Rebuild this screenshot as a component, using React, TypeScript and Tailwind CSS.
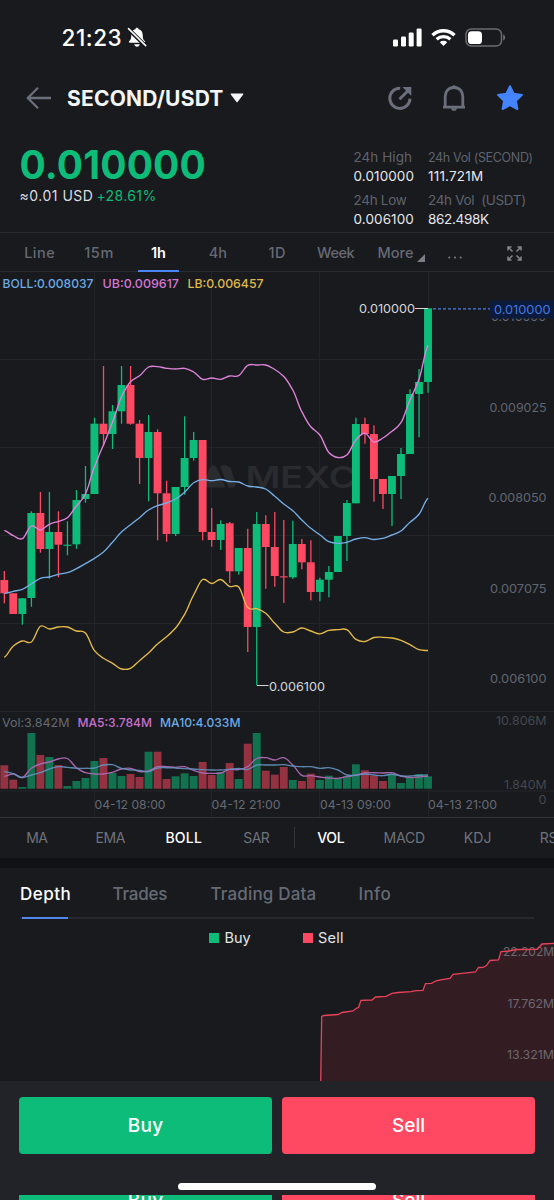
import React from "react";

type Candle = [0 | 1, number, number, number, number, number];

const GREEN = "#0dbc78";
const RED = "#ff4861";

// up flag, high, body top, body bottom, low, top of the volume bar
const candles: Candle[] = [
  [0, 571, 580, 593.3, 603.3, 765.3],
  [0, 593.3, 593.3, 614, 614, 779.7],
  [1, 598.3, 598.3, 614, 624.7, 787],
  [1, 511.3, 513, 598, 606.7, 733],
  [0, 492, 513, 549, 552.7, 755],
  [1, 492, 532, 549, 578.7, 757],
  [0, 511.3, 532, 544.7, 577.3, 765],
  [1, 521.3, 544.7, 545.8, 555.3, 786],
  [1, 490, 500, 544.3, 548.7, 781],
  [1, 466, 494, 499, 502.7, 778],
  [1, 417.7, 423.7, 494, 494, 761],
  [0, 366, 423.7, 434, 446, 758],
  [1, 405, 411.3, 434, 449, 773],
  [1, 366, 385, 411.3, 423.7, 776],
  [0, 366, 385, 423.7, 424.7, 774],
  [0, 420, 423.7, 458, 484, 777],
  [1, 415, 432, 458, 501.3, 751.7],
  [0, 429.3, 432, 493.3, 540.3, 751.7],
  [0, 480.7, 493.3, 534, 541.7, 779],
  [1, 487, 487, 534, 536, 776.3],
  [1, 416.3, 458, 487, 494.7, 773.3],
  [1, 432, 440, 458, 460.7, 776],
  [0, 440, 440, 532, 540.3, 762],
  [0, 508, 532, 540, 546.7, 775],
  [1, 520.3, 524, 540, 550, 772],
  [0, 522, 523.3, 571.3, 583, 763],
  [1, 548, 548, 571.3, 574.7, 779],
  [0, 528.7, 548, 627, 652, 743.7],
  [1, 512, 524, 627, 685.3, 733],
  [0, 515.3, 524, 547, 588.7, 770.7],
  [0, 512, 547, 576, 586.7, 774.7],
  [0, 520, 576.3, 577.4, 603, 767],
  [1, 520.7, 544, 577.3, 579, 780],
  [0, 539, 544, 562.3, 569.3, 781],
  [0, 540.3, 562.3, 592, 600.3, 773.7],
  [1, 577.7, 579.7, 592, 601.3, 780],
  [1, 566, 572, 579.7, 597.3, 775.7],
  [1, 536, 536, 572, 572, 778],
  [1, 500, 503, 536, 561, 776],
  [1, 417.7, 424, 503.3, 503.3, 764.3],
  [0, 417.7, 424, 434, 443.7, 770.3],
  [0, 425.3, 434, 479, 501.7, 775.7],
  [0, 479, 479, 494, 509, 781],
  [1, 476, 476, 494, 526, 773.7],
  [1, 448, 454, 476, 499, 783],
  [1, 389.3, 394, 454, 454, 777],
  [1, 369, 382, 394, 437.3, 774],
  [1, 308.3, 308.3, 382, 392.7, 776.3],
];

const upper = [530.3, 535.7, 538.7, 526, 530, 524.3, 521.3, 517.7, 506, 494, 466.7, 445, 422.3, 396.7, 381.7, 375.7, 367, 366.7, 368.3, 369, 368.3, 372, 379.3, 378, 379.3, 376, 375.7, 365.3, 365, 365, 369.5, 376.5, 390, 411.7, 426.7, 435, 452.5, 457.5, 455, 440, 433.3, 442, 438, 431.3, 422.7, 400, 379.3, 345.3];
const middle = [593.7, 591.3, 589.3, 584, 578.3, 577, 574.3, 572.7, 568.7, 563.7, 558.3, 552, 542.3, 532, 524.7, 517.7, 510, 505.7, 503, 499, 492.3, 482.7, 479.7, 480.7, 479.5, 481.5, 482, 486, 487, 489, 496.3, 504, 510.7, 520, 528.3, 534.7, 541.7, 543.3, 542.3, 539, 537.7, 539.5, 538.3, 535, 531, 522.3, 514.3, 498.3];
const lower = [657.3, 646, 641, 642, 626.3, 629, 627, 627, 631, 633, 650.7, 658.3, 663.3, 669, 668.3, 660.7, 653, 644, 636.7, 628, 614.3, 595, 579.5, 583.5, 579.5, 586.5, 587, 607.5, 608.7, 613.3, 623.3, 632, 632, 628, 631, 633.8, 630.3, 629.7, 629.7, 639.3, 641.5, 637.5, 637.3, 638, 640.3, 644.7, 649.7, 650.5];
const ma5 = [776.3, 774, 777.5, 768.3, 764, 762, 759, 758.5, 767.7, 772.7, 774, 774, 772.3, 769, 768.3, 771.5, 771, 766.7, 766.7, 767.3, 766.7, 770.3, 773, 773.3, 773, 769.3, 769.7, 766.7, 758.5, 757.7, 760, 757.7, 765, 775.3, 775.7, 777, 778, 778.3, 776.7, 775, 773, 772.7, 773, 772.7, 776, 777.3, 777, 776.3];
const ma10 = [771.7, 773.7, 777.5, 775, 772.7, 769, 766.7, 767.3, 768.3, 768.3, 768, 765, 764.7, 768.3, 770, 770.3, 771.7, 768, 767.7, 768, 768.7, 769, 769.7, 770, 770, 769.3, 768.5, 769.5, 765, 765, 765, 764.7, 766, 766.7, 766.7, 768.3, 767.7, 770, 775, 775.3, 774, 775, 775.7, 774.3, 776, 776, 775.3, 775];

const cx = (i: number) => 4.3 + 9.015 * i;

function smooth(ys: number[]) {
  let d = `M${cx(0)} ${ys[0]}`;
  for (let i = 0; i < ys.length - 1; i++) {
    const a = ys[Math.max(i - 1, 0)];
    const b = ys[i];
    const c = ys[i + 1];
    const e = ys[Math.min(i + 2, ys.length - 1)];
    d += `C${cx(i) + 3.4} ${b + (c - a) / 6} ${cx(i + 1) - 3.4} ${c - (e - b) / 6} ${cx(i + 1)} ${c}`;
  }
  return d;
}

function Label({ x, to, y, fill, size = 12.3, weight = 400, children }: { x: number; to: number; y: number; fill: string; size?: number; weight?: number; children: string }) {
  return (
    <text x={x} y={y} fill={fill} fontSize={size} fontWeight={weight} textLength={to - x} lengthAdjust="spacingAndGlyphs">
      {children}
    </text>
  );
}

function StatusBar() {
  return (
    <div className="flex h-[75px] shrink-0 items-center pl-[61.5px] pr-[48px]">
      <span className="pt-px text-[22.5px] leading-none font-medium tracking-[0.55px] text-white">21:23</span>
      <svg className="ml-[4.5px]" width="20" height="21" viewBox="0 0 20 21">
        <path d="M10 .8c.9 0 1.6.6 1.7 1.5 2.700.8 4 2.900 4 5.600 0 3.700.7 5 2.100 6.200.7.6.4 1.700-.6 1.700H2.800c-1 0-1.300-1.100-.6-1.700C3.600 12.900 4.300 11.600 4.300 7.900c0-2.700 1.300-4.800 4-5.600C8.400 1.400 9.100.8 10 .8z" fill="#fff" />
        <path d="M7.200 17.300h5.600c-.3 1.500-1.400 2.400-2.800 2.400s-2.500-.9-2.800-2.400z" fill="#fff" />
        <path d="M1.200 1.800l17.600 17.400" stroke="#181a1e" strokeWidth="4" />
        <path d="M1.500 1.600l17.200 17" stroke="#fff" strokeWidth="1.500" strokeLinecap="round" />
      </svg>
      <svg className="ml-auto" width="29" height="19" viewBox="0 0 29 19" fill="#fff">
        <rect x="0" y="11.500" width="5" height="7" rx="1.300" />
        <rect x="8" y="8.500" width="5" height="10" rx="1.300" />
        <rect x="15.700" y="4.500" width="5" height="14" rx="1.300" />
        <rect x="23.600" y="0.500" width="5" height="18" rx="1.300" />
      </svg>
      <svg className="ml-[9px]" width="25" height="19" viewBox="0 0 25 19">
        <path d="M1.500 7.200a16 16 0 0 1 22 0" stroke="#fff" strokeWidth="3.400" fill="none" />
        <path d="M5.600 11.300a10.200 10.200 0 0 1 13.800 0" stroke="#fff" strokeWidth="3.200" fill="none" />
        <path d="M12.500 18l-3.700-3.700a5.500 5.500 0 0 1 7.400 0z" fill="#fff" />
      </svg>
      <svg className="ml-[9px]" width="41" height="19" viewBox="0 0 41 19">
        <rect x="1" y="1" width="35.500" height="17" rx="5.300" fill="none" stroke="#6b6c70" strokeWidth="1.500" />
        <rect x="3" y="3.200" width="14" height="12.800" rx="3.600" fill="#fff" />
        <path d="M38.200 6.500c1.300.5 2 1.600 2 3s-.7 2.500-2 3z" fill="#6b6c70" />
      </svg>
    </div>
  );
}

function Header() {
  return (
    <div className="flex h-[46px] shrink-0 items-center pr-[30.500px] pl-[25.500px]">
      <svg width="26" height="24" viewBox="0 0 26 24" fill="none" stroke="#6b6f7b" strokeWidth="2.300">
        <path d="M25 12H2M12 1.800L1.800 12 12 22.200" />
      </svg>
      <h1 className="ml-[15.500px] text-[21px] leading-none font-bold tracking-[0.2px] text-[#f4f5f7]">SECOND/USDT</h1>
      <svg className="ml-[6.500px]" width="14" height="10" viewBox="0 0 14 10">
        <path d="M1.200.5h11.600c.5 0 .7.5.4.9L7.600 9c-.3.4-.8.4-1.100 0L.8 1.400C.5 1 .7.5 1.200.5z" fill="#f4f5f7" />
      </svg>
      <svg className="ml-auto" width="24" height="26" viewBox="0 0 24 26">
        <path d="M12.200 3.200a10.100 10.100 0 1 0 9.800 10.400" fill="none" stroke="#6b6f7b" strokeWidth="3" />
        <path d="M11.500 14.300l8.500-8.500" stroke="#6b6f7b" strokeWidth="3" />
        <path d="M14.300 2h9v9z" fill="#6b6f7b" />
      </svg>
      <svg className="ml-[30px]" width="24" height="28" viewBox="0 0 24 28" fill="none" stroke="#6b6f7b" strokeWidth="2.800">
        <path d="M3.200 22.500V12.500c0-5.200 3.500-9 8.800-9s8.800 3.800 8.800 9v10M1 23.200h22" />
        <path d="M9 3L12 1l3 2z" fill="#6b6f7b" stroke="none" />
        <path d="M8.800 24.300h6.400L13.700 26.800h-3.400z" fill="#6b6f7b" stroke="none" />
      </svg>
      <svg className="-mt-px ml-[30px]" width="28" height="28" viewBox="0 0 28 28">
        <path d="M14 2.200l3.600 7.600 8.400 1.100-6.100 5.800 1.500 8.300-7.400-4-7.400 4 1.500-8.300L2 10.900l8.400-1.100z" fill="#4484fd" stroke="#4484fd" strokeWidth="2" strokeLinejoin="round" />
      </svg>
    </div>
  );
}

function Stat({ label, value, labelClass, valueClass }: { label: string; value: string; labelClass: string; valueClass: string }) {
  return (
    <div className="flex flex-col text-[13.5px] leading-[19px] whitespace-pre">
      <span className={`text-[#5f636d] ${labelClass}`}>{label}</span>
      <span className={`text-[#e6e7ea] ${valueClass}`}>{value}</span>
    </div>
  );
}

function PriceSummary() {
  return (
    <div className="flex h-[111px] shrink-0">
      <div className="w-[353.500px] pl-[19.5px] pt-[23.500px]">
        <div className="text-[39px] leading-[40px] font-bold tracking-[0.14px] text-[#0dbc78]">0.010000</div>
        <div className="flex text-[14px] leading-[22px]">
          <span className="tracking-[0.5px] text-[#dcdde1]">≈0.01 USD</span>
          <span className="ml-[3px] tracking-[0.38px] text-[#0dbc78]">+28.61%</span>
        </div>
      </div>
      <div className="flex w-[74.500px] flex-col gap-[5px] pt-[27px]">
        <Stat label="24h High" value="0.010000" labelClass="tracking-[0.06px]" valueClass="tracking-[0.1px]" />
        <Stat label="24h Low" value="0.006100" labelClass="tracking-[-0.3px]" valueClass="tracking-[0.1px]" />
      </div>
      <div className="flex flex-col gap-[5px] pt-[27px]">
        <Stat label="24h Vol (SECOND)" value="111.721M" labelClass="text-[12.5px] tracking-[-0.34px]" valueClass="tracking-[0.2px]" />
        <Stat label="24h Vol  (USDT)" value="862.498K" labelClass="tracking-[-0.33px]" valueClass="tracking-[-0.33px]" />
      </div>
    </div>
  );
}

function IntervalTabs() {
  const cell = "flex h-full w-[59.4px] items-center justify-center pt-[2px]";
  return (
    <div className="flex h-[40px] shrink-0 items-center border-y border-[#292b30] pl-[10px] text-[14.5px] font-medium text-[#666973]">
      <div className={cell}><span className="tracking-[0.5px]">Line</span></div>
      <div className={cell}><span className="tracking-[0.6px]">15m</span></div>
      <div className={`${cell} relative font-semibold text-white`}>
        1h
        <span className="absolute -bottom-px left-[9px] h-[2.500px] w-[41px] bg-[#4a85f6]" />
      </div>
      <div className={cell}>4h</div>
      <div className={cell}><span className="tracking-[0.4px]">1D</span></div>
      <div className={cell}><span className="mr-[2px] tracking-[-0.4px]">Week</span></div>
      <div className={`${cell} relative`}>
        <span className="mr-px">More</span>
        <svg className="absolute right-[1px] bottom-[9px]" width="8" height="8" viewBox="0 0 8 8"><path d="M8 0v8H0z" fill="#7a7d86" /></svg>
      </div>
      <div className={cell}>
        <svg className="mt-[9px]" width="14" height="3" viewBox="0 0 14 3" fill="#757881"><circle cx="1.300" cy="1.500" r="1.100" /><circle cx="7" cy="1.500" r="1.100" /><circle cx="12.700" cy="1.500" r="1.100" /></svg>
      </div>
      <div className={cell}>
        <svg width="15" height="15" viewBox="0 0 15 15" fill="none" stroke="#84868e" strokeWidth="1.500">
          <path d="M1 4.500V1h3.500M10.500 1H14v3.500M14 10.500V14h-3.500M4.500 14H1v-3.500M1 1l4.500 4.500M14 1L9.500 5.500M14 14L9.500 9.500M1 14l4.500-4.500" />
        </svg>
      </div>
    </div>
  );
}

function PriceChart() {
  return (
    <svg className="shrink-0" width="554" height="545" viewBox="0 272 554 545" fontFamily="Inter, sans-serif">
      <g stroke="#222428" strokeWidth="1">
        {[94.5, 211.5, 319.5, 428.5].map((x) => <path key={x} d={`M${x} 272V817`} />)}
        {[359.5, 447.5, 535.5, 623.5, 711.5, 791].map((y) => <path key={y} d={`M0 ${y}H554`} />)}
      </g>

      <g fill="#292b2f">
        <path d="M203 487.500l6-18.500c1.500-4.600 6-4.600 8-.5l8.500 19z" />
        <path d="M220 466.500c3.500-2 9-1.500 11 2.500l4.500 13c1 3-.5 5.500-3.500 5.500h-3.500z" />
        <text x="245.500" y="487.500" fontSize="30" fontWeight="600" textLength="111" lengthAdjust="spacingAndGlyphs">MEXC</text>
      </g>

      {candles.map(([up, high, top, bottom, low, vol], i) => {
        const color = up ? GREEN : RED;
        const x = cx(i);
        return (
          <g key={i} fill={color}>
            <rect x={x - 0.6} y={high} width="1.300" height={low - high} />
            <rect x={x - 3.950} y={top} width="7.900" height={Math.max(bottom - top, 1)} />
            <rect x={x - 3.950} y={vol} width="7.900" height={788.7 - vol} opacity="0.540" />
          </g>
        );
      })}

      <g fill="none" strokeWidth="1.350">
        <path d={smooth(lower)} stroke="#e6bb4b" />
        <path d={smooth(upper)} stroke="#de83dc" />
        <path d={smooth(middle)} stroke="#76aee6" />
        <path d={smooth(ma5)} stroke="#a766ad" />
        <path d={smooth(ma10)} stroke="#6593c0" opacity="0.900" />
      </g>

      <Label x={2.5} to={93.5} y={287.500} fill="#6cabe6" weight={500}>BOLL:0.008037</Label>
      <Label x={102.5} to={179} y={287.500} fill="#d376d2" weight={500}>UB:0.009617</Label>
      <Label x={187.5} to={263.5} y={287.500} fill="#dfb84b" weight={500}>LB:0.006457</Label>

      <path d="M415 308.500h13M257 685.500h11.500" stroke="#d6d7da" strokeWidth="1.200" />
      <Label x={359} to={415} y={313.300} fill="#d6d7da">0.010000</Label>
      <Label x={269} to={325} y={690.700} fill="#d6d7da">0.006100</Label>

      <Label x={491} to={546} y={321} fill="#666a74">0.010000</Label>
      <path d="M433 308.800h57" stroke="#4a7fe8" strokeWidth="1.200" strokeDasharray="3 2" />
      <rect x="490" y="300.500" width="64" height="18" fill="#0c1a3b" />
      <Label x={494} to={550.5} y={314.200} fill="#4479e0">0.010000</Label>
      <Label x={489.5} to={546.5} y={411.800} fill="#61656f">0.009025</Label>
      <Label x={488.5} to={546.5} y={502.200} fill="#61656f">0.008050</Label>
      <Label x={490} to={546.5} y={592.500} fill="#61656f">0.007075</Label>
      <Label x={490} to={546.5} y={683.200} fill="#61656f">0.006100</Label>

      <Label x={2} to={69.5} y={726.600} fill="#666a73">Vol:3.842M</Label>
      <Label x={77.5} to={152} y={726.600} fill="#c86fc9" weight={500}>MA5:3.784M</Label>
      <Label x={160} to={240.5} y={726.600} fill="#6cabe6" weight={500}>MA10:4.033M</Label>
      <Label x={496} to={546.5} y={724.600} fill="#45484e">10.806M</Label>
      <Label x={504} to={546.5} y={788.600} fill="#45484e">1.840M</Label>
      <Label x={538.5} to={546.5} y={804} fill="#45484e">0</Label>

      <Label x={94.5} to={165.5} y={808.500} fill="#666a73">04-12 08:00</Label>
      <Label x={211.5} to={280.500} y={808.500} fill="#666a73">04-12 21:00</Label>
      <Label x={320} to={391} y={808.500} fill="#666a73">04-13 09:00</Label>
      <Label x={428} to={497} y={808.500} fill="#666a73">04-13 21:00</Label>
    </svg>
  );
}

function IndicatorTabs() {
  const cell = "w-[73.500px] shrink-0 text-center";
  return (
    <div className="flex h-[41px] shrink-0 items-center overflow-hidden border-t border-[#303237] pb-px text-[14px] text-[#6f737c]">
      <div className={cell}><span className="tracking-[-0.6px]">MA</span></div>
      <div className={cell}><span className="tracking-[-0.45px]">EMA</span></div>
      <div className={`${cell} font-medium text-white`}><span className="tracking-[0.2px]">BOLL</span></div>
      <div className={cell}><span className="mr-[2px] tracking-[-0.5px]">SAR</span></div>
      <div className="-mr-px h-[21px] w-px shrink-0 bg-[#34363b]" />
      <div className={`${cell} font-medium text-white`}><span className="tracking-[-0.4px]">VOL</span></div>
      <div className={cell}><span className="tracking-[-0.2px]">MACD</span></div>
      <div className={cell}><span className="tracking-[0.2px]">KDJ</span></div>
      <div className={cell}><span className="mr-[2px] tracking-[-0.2px]">RSI</span></div>
    </div>
  );
}

function DetailTabs() {
  return (
    <div className="h-[51.500px] shrink-0 px-[20px]">
      <div className="flex h-full items-center border-b-2 border-[#27292e] text-[17px] font-medium text-[#666a75]">
        <div className="relative flex h-full w-[92.500px] items-center tracking-[0.48px] text-white">
          <span className="pt-[5px]">Depth</span>
          <span className="absolute -bottom-[2px] left-[2px] h-[2.500px] w-[46px] bg-[#4f87ee]" />
        </div>
        <span className="w-[98px] pt-[5px] tracking-[-0.2px]">Trades</span>
        <span className="w-[148px] pt-[5px] tracking-[0.170px]">Trading Data</span>
        <span className="pt-[5px] tracking-[0.380px]">Info</span>
      </div>
    </div>
  );
}

const depthLine =
  "M320.700 1082L321.700 1016.500 324 1015.500 338 1014.500 342 1012.500 353 1011 356 1008.500 358.500 1007.500 361 1000.300 372 1000 375.500 997 386 996.300 392 993.300 398 992.500 411 991.700 416 990.600 423 990.300 425.500 983.600 431.500 983.300 436 980.800 442 979.600 450 978.400 453 974.400 462 973.300 475.500 972 478.500 967.500 483 967.300 486.500 965.500 490 960.500 498.500 960 501 951.700 509 951 516 949.500 537 949.300 542 944 554 943.300";

function DepthChart() {
  return (
    <div className="flex h-[161.500px] shrink-0 flex-col">
      <div className="flex h-[38px] shrink-0 items-center pl-[208.500px] text-[14.500px] leading-none text-[#e4e5e8]">
        <span className="size-[10.500px] bg-[#0dbc78]" />
        <span className="ml-[5.500px] w-[78px] pt-px">Buy</span>
        <span className="size-[10.500px] bg-[#ff4861]" />
        <span className="ml-[5px] pt-px tracking-[0.240px]">Sell</span>
      </div>
      <svg className="-mt-[18.500px] shrink-0" width="554" height="142" viewBox="0 939 554 142" fontFamily="Inter, sans-serif">
        <path d={`${depthLine}V1082Z`} fill="#331d23" />
        <Label x={503} to={554} y={956} fill="#6d686f">22.202M</Label>
        <Label x={507.5} to={554} y={1007.600} fill="#6d686f">17.762M</Label>
        <Label x={507} to={554} y={1059.200} fill="#6d686f">13.321M</Label>
        <path d={depthLine} fill="none" stroke="#e8435b" strokeWidth="1.300" />
      </svg>
    </div>
  );
}

function ActionBar() {
  return (
    <div className="flex h-[119px] shrink-0 flex-col overflow-hidden bg-[#222328] px-[19px] pt-[16.500px] text-[19px] font-medium text-white">
      <div className="flex shrink-0 gap-[10px]">
        <button className="h-[56.500px] w-[253px] rounded-[4px] bg-[#0dbc78] pt-[2px] tracking-[0.300px]">Buy</button>
        <button className="h-[56.500px] w-[253px] rounded-[4px] bg-[#ff4861] pt-[2px]">Sell</button>
      </div>
      <div className="mx-auto mt-[29.500px] h-[7px] w-[198px] shrink-0 rounded-full bg-white" />
      <div className="mt-[5px] flex h-[5px] shrink-0 gap-[10px] overflow-hidden text-center leading-[12px]">
        <div className="h-[5px] w-[253px] overflow-hidden bg-[#0dbc78] tracking-[0.300px]">Buy</div>
        <div className="h-[5px] w-[253px] overflow-hidden bg-[#ff4861]">Sell</div>
      </div>
    </div>
  );
}

export default function App() {
  return (
    <main className="flex h-[1200px] w-[554px] flex-col overflow-hidden bg-[#181a1e] font-[Inter,sans-serif]">
      <StatusBar />
      <Header />
      <PriceSummary />
      <IntervalTabs />
      <PriceChart />
      <IndicatorTabs />
      <div className="h-[9.500px] shrink-0 bg-[#111215]" />
      <DetailTabs />
      <DepthChart />
      <ActionBar />
    </main>
  );
}
